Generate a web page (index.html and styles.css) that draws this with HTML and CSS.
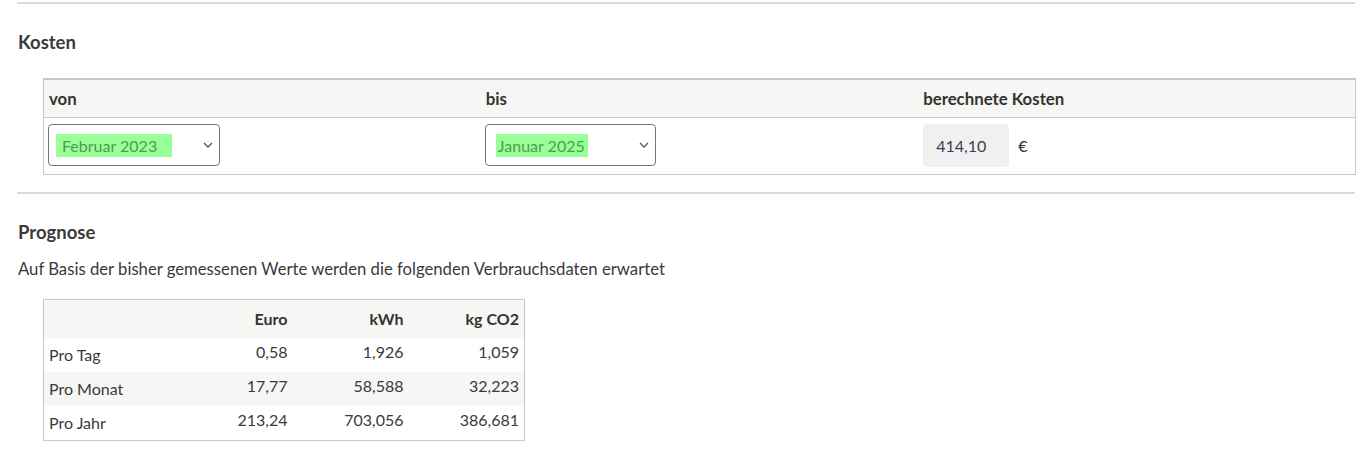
FILE: index.html
```html
<!DOCTYPE html>
<html lang="de">
<head>
<meta charset="utf-8">
<title>Kosten</title>
<link rel="stylesheet" href="styles.css">
</head>
<body>
<div class="page">
  <hr class="rule rule-top">
  <h2 class="heading heading-kosten">Kosten</h2>
  <table class="cost-table">
    <thead>
      <tr><th>von</th><th>bis</th><th>berechnete Kosten</th></tr>
    </thead>
    <tbody>
      <tr>
        <td>
          <div class="select select-von">
            <span class="hl hl-von">Februar 2023</span>
            <svg class="chev" width="10" height="6" viewBox="0 0 10 6"><path d="M1 1l4 4 4-4" fill="none" stroke="#555" stroke-width="1.3"/></svg>
          </div>
        </td>
        <td>
          <div class="select select-bis">
            <span class="hl hl-bis">Januar 2025</span>
            <svg class="chev" width="10" height="6" viewBox="0 0 10 6"><path d="M1 1l4 4 4-4" fill="none" stroke="#555" stroke-width="1.3"/></svg>
          </div>
        </td>
        <td>
          <div class="cost"><span class="cost-val">414,10</span><span class="cur">€</span></div>
        </td>
      </tr>
    </tbody>
  </table>
  <hr class="rule rule-mid">
  <h2 class="heading heading-prognose">Prognose</h2>
  <p class="intro">Auf Basis der bisher gemessenen Werte werden die folgenden Verbrauchsdaten erwartet</p>
  <table class="prog-table">
    <thead>
      <tr><th class="c1"></th><th class="num">Euro</th><th class="num">kWh</th><th class="num">kg CO2</th></tr>
    </thead>
    <tbody>
      <tr><td class="lbl">Pro Tag</td><td class="num">0,58</td><td class="num">1,926</td><td class="num">1,059</td></tr>
      <tr class="alt"><td class="lbl">Pro Monat</td><td class="num">17,77</td><td class="num">58,588</td><td class="num">32,223</td></tr>
      <tr><td class="lbl">Pro Jahr</td><td class="num">213,24</td><td class="num">703,056</td><td class="num">386,681</td></tr>
    </tbody>
  </table>
</div>
</body>
</html>
```
FILE: styles.css
```css
html, body {
  margin: 0;
  padding: 0;
  background: #fff;
}
body {
  font-family: "Lato", "Liberation Sans", sans-serif;
  font-size: 16px;
  color: #3a3a3a;
}
.page {
  width: 1338px;
  padding: 2px 0 0 17px;
}
.rule {
  border: 0;
  height: 2px;
  background: #dadada;
  margin: 0;
}
.heading {
  font-size: 18.5px;
  font-weight: 700;
  color: #3a3a3a;
  margin: 0;
  padding-left: 1px;
  line-height: 24px;
}
.heading-kosten {
  margin-top: 26px;
}
.cost-table {
  margin: 24px 0 0 26px;
  width: 1313px;
  border-collapse: collapse;
  table-layout: fixed;
  border: 1px solid #c9c9c4;
  border-top: 2px solid #c9c9c4;
}
.cost-table th,
.cost-table td,
.prog-table th,
.prog-table td {
  box-sizing: border-box;
}
.cost-table th {
  background: #f6f6f4;
  text-align: left;
  font-weight: 700;
  font-size: 16.8px;
  height: 38px;
  padding: 0 5px;
  border-bottom: 1px solid #c9c9c4;
  color: #333;
}
.cost-table td {
  height: 57px;
  padding: 0 4px 1px;
  vertical-align: middle;
}
.select {
  box-sizing: border-box;
  height: 42px;
  border: 1px solid #767676;
  border-radius: 4px;
  display: flex;
  align-items: center;
  justify-content: space-between;
  padding: 0 5px 0 7px;
  background: #fff;
}
.select-von { width: 172px; }
.select-bis { width: 171px; padding-left: 10px; }
.hl {
  background: #99ff99;
  color: #4c9e4c;
  height: 23px;
  line-height: 23px;
  display: inline-block;
}
.hl-von { padding: 0 15px 0 6px; }
.hl-bis { padding: 0 3px 0 2px; }
.chev { display: block; margin-right: 1px; }
.cost {
  display: flex;
  align-items: center;
}
.cost-val {
  box-sizing: border-box;
  width: 86px;
  height: 43px;
  line-height: 43px;
  padding-left: 13px;
  background: #f0f0f0;
  border-radius: 4px;
  color: #3d3d55;
  margin-left: 1px;
}
.cur {
  margin-left: 9px;
  color: #333;
}
.rule-mid {
  margin-top: 17px;
}
.heading-prognose {
  margin-top: 26px;
}
.intro {
  margin: 14px 0 0 1px;
  line-height: 22px;
  font-size: 16.7px;
}
.prog-table {
  margin: 19px 0 0 26px;
  border-collapse: collapse;
  border: 1px solid #c9c9c4;
  table-layout: fixed;
  width: 482px;
}
.prog-table th {
  background: #f6f6f4;
  height: 39px;
  font-weight: 700;
  padding: 0 5px;
  color: #333;
  vertical-align: middle;
}
.prog-table .c1 { width: 133px; }
.prog-table td {
  height: 34px;
  padding: 0 5px;
  line-height: 20px;
  vertical-align: middle;
}
.prog-table .num { text-align: right; }
.prog-table td.num { padding-bottom: 6px; }
.prog-table td.lbl { padding-top: 0; }
.prog-table tr.alt td { background: #f6f6f4; }
```
